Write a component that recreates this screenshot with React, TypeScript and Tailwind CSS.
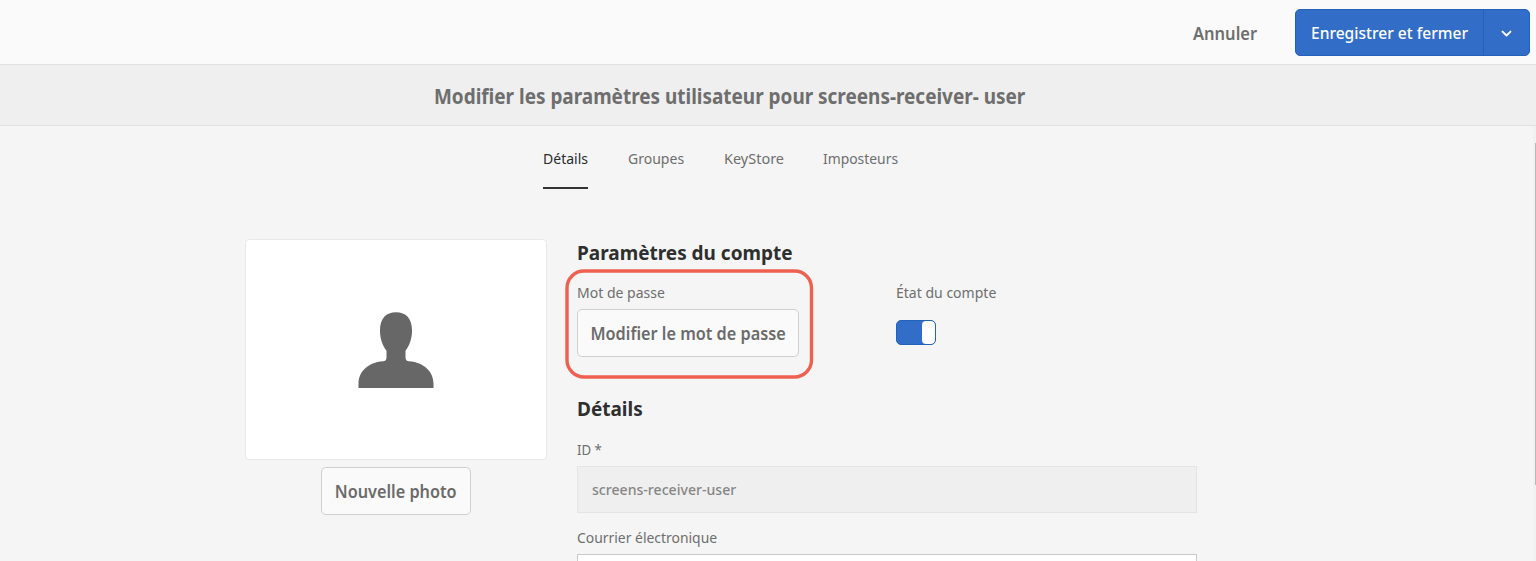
import type { ReactNode } from "react";

function Narrow({ children, className = "" }: { children: ReactNode; className?: string }) {
  return <span className={`inline-block whitespace-nowrap ${className}`}>{children}</span>;
}

function Label({ children, className = "leading-[18px]", scale = "scale-x-[.935]" }: { children: ReactNode; className?: string; scale?: string }) {
  return (
    <div className={`h-5 text-[15px] text-[#6e6e6e] ${className}`}>
      <Narrow className={`origin-left ${scale}`}>{children}</Narrow>
    </div>
  );
}

function Button({ children, className }: { children: ReactNode; className: string }) {
  return (
    <button
      className={`flex h-12 items-center justify-center rounded-[5px] border border-[#cfcfcf] bg-[#fafafa] pt-px text-[17px] font-semibold text-[#6b6b6b] ${className}`}
    >
      <Narrow className="origin-center scale-x-[.956]">{children}</Narrow>
    </button>
  );
}

function Heading({ children, className = "" }: { children: ReactNode; className?: string }) {
  return (
    <h2 className={`h-7 text-[20px] font-bold leading-7 text-[#2f2f2f] ${className}`}>
      <Narrow className="origin-left scale-x-[.949]">{children}</Narrow>
    </h2>
  );
}

function Header() {
  return (
    <header className="flex h-[65px] items-start justify-end border-b border-[#e1e1e1] bg-[#fafafa] pr-[6px] pt-[9px]">
      <button className="mr-[38px] flex h-[47px] items-center pt-[2px] text-[17px] font-semibold text-[#6e6e6e]">
        <Narrow className="origin-right scale-x-[.97]">Annuler</Narrow>
      </button>
      <div className="flex h-[47px] w-[235px] overflow-hidden rounded-[5px] border border-[#2461bb] bg-[#326ec8] text-white">
        <button className="flex w-[188px] items-center border-r border-[#2461bb] pl-[15px] pt-px text-[17px] font-medium">
          <Narrow className="origin-left scale-x-[.915]">Enregistrer et fermer</Narrow>
        </button>
        <button className="flex flex-1 items-center justify-center pt-[3px]" aria-label="Plus">
          <svg width="12" height="8" viewBox="0 0 12 8" fill="none">
            <path d="M1.5 1.6 5.500 5.500 9.500 1.6" stroke="white" strokeWidth="1.9" strokeLinecap="round" strokeLinejoin="round" />
          </svg>
        </button>
      </div>
    </header>
  );
}

function Tabs() {
  const base = "h-[63px] pt-5 text-[15px] leading-6";
  return (
    <nav className="flex gap-10 pl-[543px] text-[#6e6e6e]">
      <a className={`${base} w-[45px] border-b-2 border-[#323232] text-[#2c2c2c]`}>
        <Narrow className="origin-left scale-x-[.935]">Détails</Narrow>
      </a>
      <a className={`${base} w-14`}>
        <Narrow className="origin-left scale-x-[.935]">Groupes</Narrow>
      </a>
      <a className={`${base} w-[59px]`}>
        <Narrow className="origin-left scale-x-[.965]">KeyStore</Narrow>
      </a>
      <a className={base}>
        <Narrow className="origin-left scale-x-[.925]">Imposteurs</Narrow>
      </a>
    </nav>
  );
}

function Photo() {
  return (
    <section className="flex w-[302px] flex-col items-center gap-[7px]">
      <div className="flex h-[221px] w-full items-center justify-center rounded-[4px] border border-[#e8e8e8] bg-white">
        <svg width="76" height="76" viewBox="0 0 76 76" fill="#676767" className="mt-px">
          <path d="M38 0.300C48 0.300 54 6.500 54 18.500C54 27 51.500 33.500 47.500 38.800V45.500Q47.500 49 51 49.200C66 50.500 75.500 59.500 75.500 71.500V76H.5V71.500C.5 59.500 10 50.500 25 49.200Q28.500 49 28.500 45.500V38.800C24.500 33.500 22 27 22 18.500C22 6.500 28 0.300 38 0.300Z" />
        </svg>
      </div>
      <Button className="w-[150px]">Nouvelle photo</Button>
    </section>
  );
}

function Account() {
  return (
    <section className="w-[620px]">
      <Heading>Paramètres du compte</Heading>
      <div className="mt-4 flex">
        <div className="relative w-[319px]">
          <Label>Mot de passe</Label>
          <Button className="mt-[6px] w-[222px]">Modifier le mot de passe</Button>
          <svg
            className="pointer-events-none absolute -left-3 -top-[14px]"
            width="249"
            height="110"
            viewBox="0 0 249 110"
            fill="none"
          >
            <rect x="2" y="2" width="244.500" height="106" rx="17" stroke="#ee6150" strokeWidth="3.400" />
          </svg>
        </div>
        <div>
          <Label>État du compte</Label>
          <button
            role="switch"
            aria-checked="true"
            className="mt-[17px] flex h-[25px] w-10 justify-end overflow-hidden rounded-[5px] border border-[#2461bb] bg-[#326ec8]"
          >
            <span className="h-full w-[13px] rounded-[4px] bg-white" />
          </button>
        </div>
      </div>
      <Heading className="mt-[38px]">Détails</Heading>
      <div className="mt-4">
        <Label className="leading-5" scale="scale-x-[.88]">ID *</Label>
        <div className="mt-[7px] flex h-[47px] items-center border border-[#e4e4e4] bg-[#efefef] px-[14px] text-[15px] font-medium text-[#868686]">
          <Narrow className="origin-left scale-x-[.94]">screens-receiver-user</Narrow>
        </div>
      </div>
      <div className="mt-[15px]">
        <Label scale="scale-x-[.927]">Courrier électronique</Label>
        <div className="mt-[6px] h-12 border border-[#cacaca] bg-white" />
      </div>
    </section>
  );
}

export default function App() {
  return (
    <div className="relative h-[561px] w-full overflow-hidden bg-[#f5f5f5] font-['Noto_Sans','Open_Sans',sans-serif]">
      <Header />
      <div className="flex h-[61px] items-center border-b border-[#e1e1e1] bg-[#efefef] pl-[434px]">
        <h1 className="pt-px text-[21px] font-bold leading-7 text-[#6e6e6e]">
          <Narrow className="origin-left scale-x-[.902]">
            Modifier les paramètres utilisateur pour screens-receiver- user
          </Narrow>
        </h1>
      </div>
      <Tabs />
      <main className="flex gap-[30px] pl-[245px] pt-[50px]">
        <Photo />
        <Account />
      </main>
      <div className="absolute right-0 top-[126px] h-[435px] w-[3px] bg-[#f1f1f1]">
        <div className="ml-auto mt-[17px] h-[342px] w-px bg-[#b9b9b9]" />
      </div>
    </div>
  );
}
